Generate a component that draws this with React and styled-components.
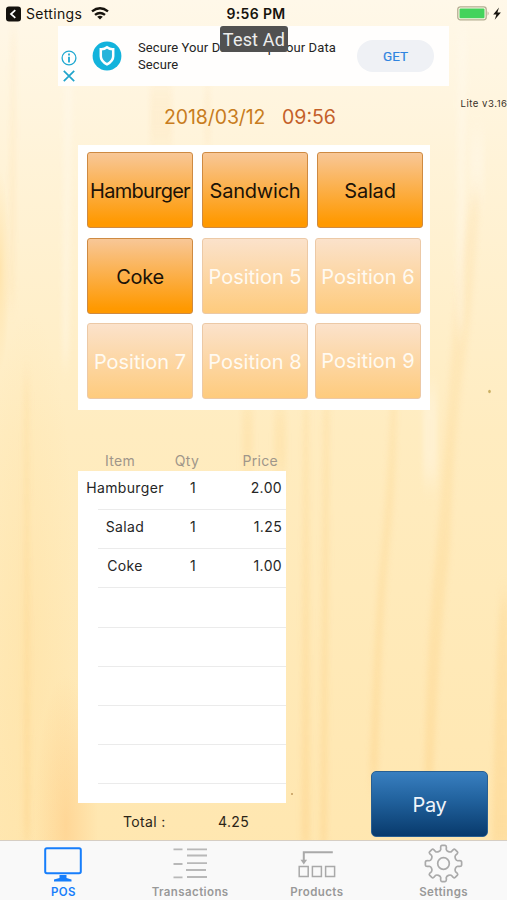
import React from "react";
import styled, { createGlobalStyle, css } from "styled-components";

const GlobalStyle = createGlobalStyle`
  * { box-sizing: border-box; }
  html, body { margin: 0; padding: 0; }
  body { font-family: Inter, "Liberation Sans", sans-serif; background: #ffecc0; }
  button { font-family: inherit; padding: 0; margin: 0; }
`;

const Screen = styled.main`
  position: relative;
  isolation: isolate;
  width: 507px;
  height: 900px;
  overflow: hidden;
  display: flex;
  flex-direction: column;
`;

const WoodBackdrop = styled.svg`
  position: absolute;
  inset: 0;
  z-index: -1;
`;

const StatusBar = styled.header`
  height: 26px;
  flex: none;
  display: grid;
  grid-template-columns: 1fr auto 1fr;
  align-items: center;
  padding: 1px 5px 0 6px;
  color: #17130d;
`;

const StatusGroup = styled.div`
  display: flex;
  align-items: center;
  justify-content: ${(p) => (p.$end ? "flex-end" : "flex-start")};
  svg { display: block; }
`;

const BackLabel = styled.span`
  font-size: 14px;
  line-height: 16px;
  letter-spacing: 0.33px;
  margin: 0 9px 0 5px;
`;

const Clock = styled.span`
  font-size: 14px;
  line-height: 16px;
  font-weight: 600;
  letter-spacing: 0.35px;
  margin-left: 4px;
`;

const AdBanner = styled.section`
  position: relative;
  width: 391px;
  height: 60px;
  flex: none;
  margin-left: 58px;
  background: #fffefd;
  display: flex;
  align-items: center;
  font-family: Roboto, sans-serif;
`;

const AdChoices = styled.div`
  width: 22px;
  display: flex;
  flex-direction: column;
  align-items: center;
  gap: 4px;
  padding-top: 20px;
  svg { display: block; }
`;

const AdLogo = styled.svg`
  display: block;
  margin: 0 16px 0 12px;
`;

const AdCopy = styled.p`
  width: 204px;
  margin: 0;
  font-size: 13px;
  line-height: 17px;
  letter-spacing: 0.09px;
  white-space: pre-line;
  color: #252423;
`;

const AdButton = styled.button`
  width: 77px;
  height: 32px;
  margin-left: 15px;
  border: 0;
  border-radius: 16px;
  background: #eff1f5;
  color: #3084e0;
  font-family: Roboto, sans-serif;
  font-size: 13.5px;
  font-weight: 400;
  -webkit-text-stroke: 0.2px #3084e0;
`;

const TestBadge = styled.span`
  position: absolute;
  left: 162px;
  top: 0;
  width: 68px;
  height: 26px;
  border-radius: 3px;
  background: #515151;
  color: #ededed;
  font-size: 18px;
  line-height: 27px;
  letter-spacing: 0.2px;
  text-align: center;
  white-space: nowrap;
`;

const InfoRow = styled.div`
  height: 59px;
  flex: none;
  display: grid;
  grid-template-columns: 164px 118px 1fr auto;
  align-items: start;
`;

const DateText = styled.time`
  grid-column: ${(p) => p.$column};
  padding-top: 18px;
  font-size: 19.5px;
  line-height: 26px;
  letter-spacing: ${(p) => p.$spacing}px;
  white-space: nowrap;
  color: ${(p) => p.$color};
`;

const Version = styled.span`
  grid-column: 4;
  padding-top: 12px;
  font-size: 9.6px;
  line-height: 12px;
  letter-spacing: 0.5px;
  margin-right: -0.5px;
  color: #373028;
`;

const Keypad = styled.section`
  width: 352px;
  height: 265px;
  flex: none;
  margin-left: 78px;
  padding: 7px 0 0 9px;
  background: #fff;
  display: flex;
  flex-direction: column;
  gap: 9.5px;
`;

const KeyRow = styled.div`
  display: flex;
  gap: 9px;
`;

const emptyKey = css`
  border-color: #ecc9a6;
  background: linear-gradient(#fbe2cb, #fecb7d);
  color: #fffaf1;
`;

const ProductKey = styled.button`
  width: 106px;
  height: 76px;
  margin-left: ${(p) => (p.$tight ? -2 : 0)}px;
  border: 1px solid #ce8a42;
  border-radius: 3px;
  background: linear-gradient(#f8c797, #ff9900 94%);
  color: #1b1207;
  font-size: 20px;
  line-height: 24px;
  letter-spacing: ${(p) => p.$spacing || 0}px;
  padding-top: ${(p) => (p.$raised ? 0 : 2)}px;
  white-space: nowrap;
  ${(p) => p.$empty && emptyKey}
`;

const Receipt = styled.section`
  width: 208px;
  flex: none;
  margin: 41px 0 0 78px;
`;

const columns = css`
  display: grid;
  grid-template-columns: 94px 42px 1fr;
  align-items: center;
  text-align: center;
`;

const ReceiptHead = styled.div`
  ${columns}
  height: 20px;
  grid-template-columns: 84px 50px 1fr;
  font-size: 14px;
  line-height: 18px;
  letter-spacing: 0.3px;
  color: #a0968a;
  span:last-child { text-align: right; padding-right: 8px; }
`;

const ReceiptBody = styled.div`
  height: 332px;
  overflow: hidden;
  background: #fff;
`;

const ReceiptRow = styled.div`
  ${columns}
  height: 39.15px;
  padding-bottom: 6px;
  background: linear-gradient(#ebebeb, #ebebeb) 20px 100% / 188px 1px no-repeat;
  font-size: 14px;
  line-height: 18px;
  letter-spacing: 0.35px;
  color: #262626;
  span:last-child { text-align: right; padding-right: 4px; }
`;

const Footer = styled.footer`
  height: 37px;
  flex: none;
  display: flex;
  align-items: flex-start;
  padding: 10px 19px 0 123px;
  font-size: 14px;
  line-height: 18px;
  letter-spacing: 0.35px;
  color: #2b2417;
`;

const FooterLabel = styled.span`
  width: 95px;
`;

const PayButton = styled.button`
  width: 117px;
  height: 66px;
  margin: -42px 0 0 auto;
  border: 1px solid #295f92;
  border-radius: 5px;
  background: linear-gradient(#397fc0, #22639f 42%, #083a6c);
  color: #f1f5fa;
  font-size: 20px;
  letter-spacing: -0.3px;
  padding-top: 2px;
`;

const TabBar = styled.nav`
  height: 60px;
  flex: none;
  display: grid;
  grid-template-columns: repeat(4, 1fr);
  border-top: 1px solid #d6cec4;
  background: #f9f9f9;
`;

const Tab = styled.a`
  display: flex;
  flex-direction: column;
  align-items: center;
  color: ${(p) => (p.$active ? "#177efb" : "#999999")};
  padding-top: 4px;
  font-size: 11.5px;
  line-height: 14px;
  font-weight: 600;
  letter-spacing: 0.4px;
  svg { display: block; margin-bottom: 3px; }
`;

const Wood = () => (
  <WoodBackdrop width="507" height="900" viewBox="0 0 507 900" aria-hidden="true">
    <defs>
      <linearGradient id="base" x1="0" y1="0" x2="0" y2="1">
        <stop offset="0" stopColor="#fff8e9" />
        <stop offset=".18" stopColor="#fff3d8" />
        <stop offset=".48" stopColor="#ffecc0" />
        <stop offset="1" stopColor="#ffe6ae" />
      </linearGradient>
      <linearGradient id="streak" gradientUnits="userSpaceOnUse" x1="0" y1="0" x2="0" y2="900">
        <stop offset="0" stopColor="#fbd594" stopOpacity=".12" />
        <stop offset=".5" stopColor="#fcd387" stopOpacity=".25" />
        <stop offset="1" stopColor="#fccb7c" stopOpacity=".36" />
      </linearGradient>
      <radialGradient id="corner">
        <stop offset="0" stopColor="#ffc67c" stopOpacity=".5" />
        <stop offset="1" stopColor="#ffc67c" stopOpacity="0" />
      </radialGradient>
      <radialGradient id="edge">
        <stop offset="0" stopColor="#ffd98e" stopOpacity=".5" />
        <stop offset="1" stopColor="#ffd98e" stopOpacity="0" />
      </radialGradient>
      <filter id="soft" x="-30%" y="-10%" width="160%" height="120%" colorInterpolationFilters="sRGB">
        <feGaussianBlur stdDeviation="2.8 12" />
      </filter>
    </defs>
    <rect width="507" height="900" fill="url(#base)" />
    <ellipse cx="66" cy="825" rx="32" ry="150" fill="url(#corner)" />
    <ellipse cx="0" cy="270" rx="10" ry="100" fill="url(#edge)" />
    <ellipse cx="30" cy="640" rx="48" ry="330" fill="url(#edge)" opacity=".5" />
    <g filter="url(#soft)" fill="url(#streak)">
      <path d="M11 30h5l-2 270h-5zM24 380h5l1 460h-6zM150 84h22v62h-22zM205 84h5v62h-5zM242 405h11v66h-11zM274 408h12v64h-12zM303 400h6l1 450h-9zM323 400h7l-3 450h-7z" />
      <path d="M391 390h6q0 100-8 160-8 80-11 230h-9q4-120 9-200 9-80 13-190zM473 190h7q-6 110-16 175t-14 185q-12 90-17 240h-9q2-150 12-240 8-80 14-180t23-180zM500 600h9v250h-17q3-180 8-250z" />
    </g>
    <g filter="url(#soft)" fill="#fffaf0" opacity=".35">
      <path d="M64 60h9l-4 300h-7zM458 30h9l-3 300h-8zM470 135h14v60h-14zM423 390h14v90h-14z" />
    </g>
    <ellipse cx="489.5" cy="391.5" rx="1.3" ry="1.7" fill="#cbb064" />
    <circle cx="292" cy="794" r="1" fill="#c29a5b" />
  </WoodBackdrop>
);

const BackIcon = () => (
  <svg width="15" height="16" viewBox="0 0 15 16">
    <rect y=".5" width="15" height="15" rx="3" fill="#14110c" />
    <path d="M9.3 4.2 5 8l4.3 3.8" fill="none" stroke="#fff" strokeWidth="1.7" />
  </svg>
);

const WifiIcon = () => (
  <svg width="18" height="13" viewBox="0 0 18 13" fill="none" stroke="#17130d" strokeWidth="2.4">
    <path d="M1 4.4q8-6.3 16 0M4 7.9q5-4 10 0" />
    <path d="M9 12.6 6.2 9.8q2.8-2 5.6 0z" fill="#17130d" stroke="none" />
  </svg>
);

const BatteryIcon = () => (
  <svg width="45" height="15" viewBox="0 0 45 15">
    <rect x=".8" y=".8" width="28.4" height="13" rx="2.5" fill="none" stroke="#b3ad91" strokeWidth="1.3" />
    <rect x="2.5" y="2.4" width="25" height="9.8" rx="1" fill="#43d35c" />
    <path d="M30.6 5.2q2 2 0 4.5z" fill="#b3ad91" />
    <path d="M42 1.6 36.2 8.4h3.2l-1.7 5.3 6.2-7.1h-3.5z" fill="#17130d" />
  </svg>
);

const AdIcons = () => (
  <AdChoices>
    <svg width="16" height="16" viewBox="0 0 16 16" fill="none" stroke="#21a9d1">
      <circle cx="8" cy="8" r="6.9" strokeWidth="1.3" />
      <path d="M8 3.5v2M8 6.8v5.6" strokeWidth="1.8" />
    </svg>
    <svg width="12" height="12" viewBox="0 0 12 12">
      <path d="m.8.8 10.4 10.4M11.2.8.8 11.2" stroke="#21a4cb" strokeWidth="1.7" />
    </svg>
  </AdChoices>
);

const ShieldLogo = () => (
  <AdLogo width="30" height="30" viewBox="0 0 30 30">
    <circle cx="15" cy="15" r="14.4" fill="#13b3dc" />
    <path d="M15 6.3q3 2.3 6.2 2v7q0 5-6.2 8-6.2-3-6.2-8v-7q3.2.3 6.2-2z" fill="#26b4db" stroke="#fff" strokeWidth="2.5" />
  </AdLogo>
);

const PosIcon = () => (
  <svg width="38" height="37" viewBox="0 0 38 37" fill="none" stroke="currentColor">
    <rect x="1.2" y="3.3" width="35.6" height="25" rx="1.7" strokeWidth="2" />
    <path d="M15.5 30h7v3l5 1.4v2H10v-2l5.5-1.4z" fill="currentColor" stroke="none" />
  </svg>
);

const TransactionsIcon = () => (
  <svg width="34" height="37" viewBox="0 0 34 37" fill="none" stroke="#b8b8b8" strokeWidth="1.8">
    <path d="M.5 4.4h9M14 4.4h20M14 10.5h20M.5 19h9M14 18.2h20M13 25h20M.5 32.3h9M14 32h20" />
  </svg>
);

const ProductsIcon = () => (
  <svg width="38" height="37" viewBox="0 0 38 37" fill="none" stroke="#a9a9a9" strokeWidth="1.5">
    <path d="M5.8 16.5V7.2h29" strokeWidth="2" />
    <path d="m2.5 14.8 3.3 4.6 3.3-4.6z" fill="#a9a9a9" stroke="none" />
    <path d="M1.2 21.5h9v10h-9zM14.4 21.5h9v10h-9zM27.6 21.5h9v10h-9z" />
  </svg>
);

/* Eight rounded teeth joined by concave valleys. */
const GEAR_PATH = (() => {
  const polar = (r, deg) => {
    const a = (deg * Math.PI) / 180;
    return `${(18.5 + r * Math.cos(a)).toFixed(2)} ${(18.5 + r * Math.sin(a)).toFixed(2)}`;
  };
  let d = `M${polar(14.4, -90 - 11)}`;
  for (let i = 0; i < 8; i += 1) {
    const c = i * 45 - 90;
    d += `L${polar(16.6, c - 10)}Q${polar(18.2, c - 9)} ${polar(18.2, c - 5)}L${polar(18.2, c + 5)}`;
    d += `Q${polar(18.2, c + 9)} ${polar(16.6, c + 10)}L${polar(14.4, c + 11)}`;
    d += `C${polar(12.6, c + 14)} ${polar(12.6, c + 31)} ${polar(14.4, c + 34)}`;
  }
  return `${d}Z`;
})();

const GearIcon = () => (
  <svg width="37" height="37" viewBox="0 0 37 37" fill="none" stroke="#aaaaaa" strokeWidth="1.7" strokeLinejoin="round" overflow="visible">
    <path d={GEAR_PATH} />
    <circle cx="18.5" cy="18.5" r="5.8" />
  </svg>
);

const KEYS = [
  [
    { label: "Hamburger", spacing: -0.72 },
    { label: "Sandwich", spacing: -0.2 },
    { label: "Salad", spacing: -0.2 },
  ],
  [
    { label: "Coke", spacing: -0.3 },
    { label: "Position 5", empty: true },
    { label: "Position 6", empty: true, tight: true },
  ],
  [
    { label: "Position 7", empty: true },
    { label: "Position 8", empty: true },
    { label: "Position 9", empty: true, tight: true, raised: true },
  ],
];

const ITEMS = [
  ["Hamburger", "1", "2.00"],
  ["Salad", "1", "1.25"],
  ["Coke", "1", "1.00"],
  [], [], [], [], [],
];

const TABS = [
  { label: "POS", icon: PosIcon, active: true },
  { label: "Transactions", icon: TransactionsIcon },
  { label: "Products", icon: ProductsIcon },
  { label: "Settings", icon: GearIcon },
];

export default function App() {
  return (
    <>
      <GlobalStyle />
      <Screen>
        <Wood />
        <StatusBar>
          <StatusGroup>
            <BackIcon />
            <BackLabel>Settings</BackLabel>
            <WifiIcon />
          </StatusGroup>
          <Clock>9:56 PM</Clock>
          <StatusGroup $end>
            <BatteryIcon />
          </StatusGroup>
        </StatusBar>

        <AdBanner>
          <AdIcons />
          <ShieldLogo />
          <AdCopy>{"Secure Your Data. Keep Your Data\nSecure"}</AdCopy>
          <AdButton>GET</AdButton>
          <TestBadge>Test Ad</TestBadge>
        </AdBanner>

        <InfoRow>
          <DateText $column={2} $color="#c87c20" $spacing={-0.1}>2018/03/12</DateText>
          <DateText $column={3} $color="#c4602a" $spacing={0}>09:56</DateText>
          <Version>Lite v3.16</Version>
        </InfoRow>

        <Keypad>
          {KEYS.map((row) => (
            <KeyRow key={row[0].label}>
              {row.map((k) => (
                <ProductKey key={k.label} $empty={k.empty} $tight={k.tight} $raised={k.raised} $spacing={k.spacing}>
                  {k.label}
                </ProductKey>
              ))}
            </KeyRow>
          ))}
        </Keypad>

        <Receipt>
          <ReceiptHead>
            <span>Item</span>
            <span>Qty</span>
            <span>Price</span>
          </ReceiptHead>
          <ReceiptBody>
            {ITEMS.map(([name, qty, price], i) => (
              <ReceiptRow key={i}>
                <span>{name}</span>
                <span>{qty}</span>
                <span>{price}</span>
              </ReceiptRow>
            ))}
          </ReceiptBody>
        </Receipt>

        <Footer>
          <FooterLabel>Total :</FooterLabel>
          <span>4.25</span>
          <PayButton>Pay</PayButton>
        </Footer>

        <TabBar>
          {TABS.map(({ label, icon: Icon, active }) => (
            <Tab key={label} $active={active}>
              <Icon />
              {label}
            </Tab>
          ))}
        </TabBar>
      </Screen>
    </>
  );
}
